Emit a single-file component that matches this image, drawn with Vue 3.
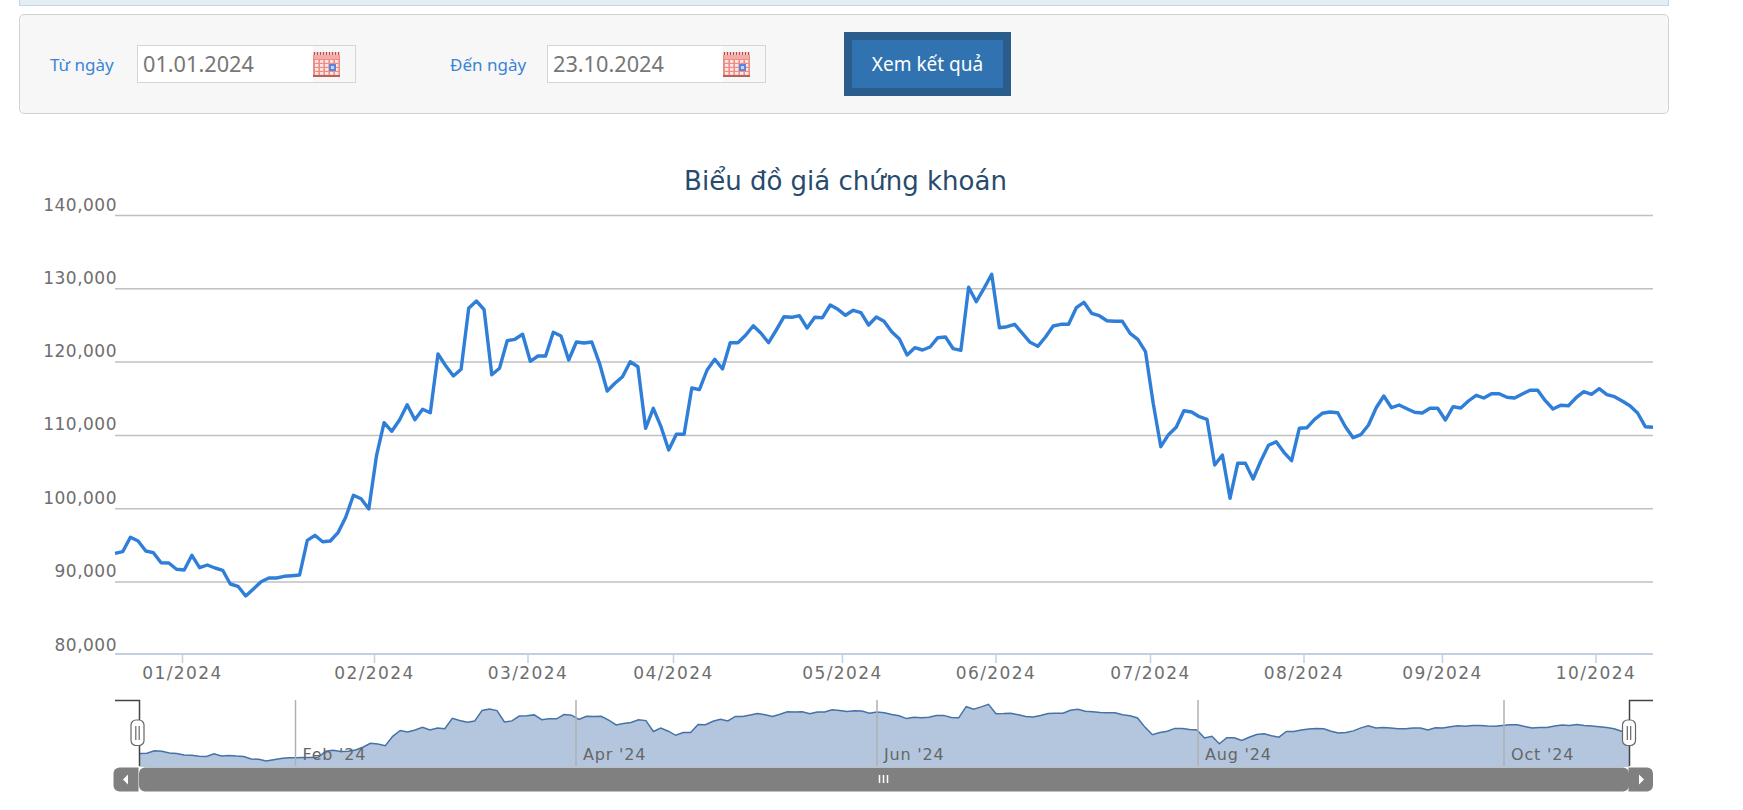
<template>
  <div class="page">
    <div class="top-strip"></div>

    <div class="filter-panel">
      <div v-for="field in dateFields" :key="field.label" class="field">
        <label class="field-label">{{ field.label }}</label>
        <div class="date-box">
          <span class="date-value">{{ field.value }}</span>
          <span class="date-icon">
            <svg width="27" height="25" viewBox="0 0 27 25">
              <rect x="0" y="0" width="27" height="25" fill="#ec8d86" />
              <rect x="0" y="0" width="27" height="3" fill="#f7c6c2" />
              <rect v-for="n in 9" :key="n" :x="n * 3 - 2" y="0" width="1" height="3" fill="#a8504a" />
              <rect x="1" y="3" width="25" height="4" fill="#f6aca6" />
              <template v-for="row in 4" :key="row">
                <rect
                  v-for="col in 5"
                  :key="col"
                  :x="col * 5 - 3"
                  :y="row * 4 + 4"
                  width="3.4"
                  height="2.8"
                  fill="#fde6e4"
                />
              </template>
              <rect x="0" y="23" width="27" height="2" fill="#b9605a" />
              <rect x="16" y="12" width="7" height="7" fill="#5f83dc" />
              <rect x="18" y="14" width="3" height="3" fill="#c8d6f6" />
            </svg>
          </span>
        </div>
      </div>
      <button class="submit-btn" type="button">Xem kết quả</button>
    </div>

    <svg class="chart" width="1743" height="696" viewBox="0 114 1743 696">
      <text x="845.5" y="190" text-anchor="middle" class="chart-title">Biểu đồ giá chứng khoán</text>

      <g v-for="tick in yTicks" :key="tick.label">
        <line v-if="tick.y < 650" x1="115" x2="1653" :y1="tick.y" :y2="tick.y" class="grid-line" />
        <text x="117" :y="tick.y - 5" text-anchor="end" class="axis-label y-label">{{ tick.label }}</text>
      </g>

      <line x1="115" x2="1653" y1="654" y2="654" class="axis-line" />
      <g v-for="tick in xTicks" :key="tick.label">
        <line :x1="tick.x" :x2="tick.x" y1="654" y2="663" class="axis-tick" />
        <text :x="tick.x" y="678.5" text-anchor="middle" class="axis-label x-label">{{ tick.label }}</text>
      </g>

      <polyline :points="pricePoints" class="price-line" />

      <!-- navigator -->
      <path :d="navArea" class="nav-area" />
      <polyline :points="navPoints" class="nav-line" />
      <g v-for="tick in navTicks" :key="tick.label">
        <line :x1="tick.x" :x2="tick.x" y1="700" y2="766" class="nav-tick" />
        <text :x="tick.x + 7" y="760" class="nav-label">{{ tick.label }}</text>
      </g>

      <path d="M115 700.5H139.5V766" class="nav-mask" />
      <path d="M1653 700.5H1629.5V766" class="nav-mask" />
      <g v-for="x in [137.5, 1629]" :key="x">
        <rect :x="x - 6.5" y="720" width="13" height="25.5" rx="5" class="handle" />
        <line :x1="x - 1.7" :x2="x - 1.7" y1="726" y2="740" class="handle-grip" />
        <line :x1="x + 1.7" :x2="x + 1.7" y1="726" y2="740" class="handle-grip" />
      </g>

      <!-- scrollbar -->
      <path d="M138.5 767.5H119.5a6 6 0 0 0-6 6v12a6 6 0 0 0 6 6H138.5z" class="scroll-part" />
      <path d="M1628.5 767.5H1647a6 6 0 0 1 6 6v12a6 6 0 0 1-6 6H1628.5z" class="scroll-part" />
      <rect x="139" y="767.5" width="1490" height="24" rx="6" class="scroll-part" />
      <path d="M128 774.5v10l-5-5z" class="scroll-arrow" />
      <path d="M1639 774.5v10l5-5z" class="scroll-arrow" />
      <path d="M879.5 775v8M883.5 775v8M887.5 775v8" class="scroll-grip" />
    </svg>
  </div>
</template>

<script setup>
// y pixels read off the reference chart, kept per section
const part1 = [820, 815, 772, 783, 813, 818, 848, 849, 868, 870, 826, 863, 855, 864, 871, 912, 919, 948, 927, 905, 894, 894, 889, 887, 885, 781, 766, 785, 783, 758, 712, 646, 656, 687, 527, 428, 454, 420, 374, 419, 388, 398, 222, 257, 288, 268, 85, 63, 89, 284, 265, 182, 178, 163, 244, 228, 228, 157, 168, 240, 186, 189, 186, 250, 333, 310, 290, 245]
const part2 = [320, 505, 445, 500, 570, 523, 523, 384, 389, 330, 298, 327, 248, 248, 226, 197, 220, 248, 210, 170, 172, 167, 204, 172, 173, 135, 148, 166, 151, 158, 195, 171, 184, 215, 237, 285, 263, 270, 261, 233, 231, 266, 271, 82, 125, 85, 43, 203, 200, 193, 220, 247, 259, 231, 198, 193, 193, 143, 127, 160, 167, 182, 184, 184, 220, 238]
const part3 = [35, 190, 320, 284, 262, 212, 216, 230, 238, 375, 345, 475, 370, 370, 417, 363, 316, 305, 337, 362, 265, 263, 238, 220, 216, 218, 260, 293, 284, 255, 203, 168, 203, 195, 206, 217, 219, 205, 205, 240, 200, 204, 183, 166, 174, 161, 161, 172, 174, 162, 151, 151, 182, 207, 196, 197, 173, 155, 163, 146, 164, 170, 183, 197, 219, 260, 262]

const priceY = [
  ...part1.map((v) => 280 + v / 3),
  ...part2.map((v) => 260 + v / 3),
  ...part3.map((v) => 340 + v / 3),
]

const dateFields = [
  { label: 'Từ ngày', value: '01.01.2024' },
  { label: 'Đến ngày', value: '23.10.2024' },
]

const yLabels = ['140,000', '130,000', '120,000', '110,000', '100,000', '90,000', '80,000']
const yTicks = yLabels.map((label, i) => ({ label, y: i === 6 ? 655.5 : 215.5 + i * 73.3 }))

const xTicks = [
  { label: '01/2024', x: 182.5 },
  { label: '02/2024', x: 374.5 },
  { label: '03/2024', x: 528 },
  { label: '04/2024', x: 673.5 },
  { label: '05/2024', x: 842.5 },
  { label: '06/2024', x: 996 },
  { label: '07/2024', x: 1150.5 },
  { label: '08/2024', x: 1304 },
  { label: '09/2024', x: 1442.5 },
  { label: '10/2024', x: 1596 },
]

const navTicks = [
  { label: "Feb '24", x: 295.5 },
  { label: "Apr '24", x: 576 },
  { label: "Jun '24", x: 877 },
  { label: "Aug '24", x: 1198 },
  { label: "Oct '24", x: 1504 },
]

const last = priceY.length - 1
const pricePoints = priceY.map((y, i) => `${(115 + (i * 1538) / last).toFixed(1)},${y.toFixed(1)}`).join(' ')

const navCoords = priceY.map((y, i) => [139.5 + (i * 1489.5) / last, 761 - (596 - y) * 0.176])
const navPoints = navCoords.map(([x, y]) => `${x.toFixed(1)},${y.toFixed(1)}`).join(' ')
const navArea = `M139.5 767L${navPoints.replaceAll(' ', 'L')}L1629 767Z`
</script>

<style>
html,
body {
  background: #fff;
}
</style>

<style scoped>
.page {
  width: 1743px;
  height: 810px;
  overflow: hidden;
  font-family: "Noto Sans", "DejaVu Sans", sans-serif;
}

.top-strip {
  box-sizing: border-box;
  width: 1650px;
  height: 6px;
  margin-left: 19px;
  background-color: #e3edf4;
  border: 1px solid #c6d6e2;
  border-top: none;
}

.filter-panel {
  box-sizing: border-box;
  display: flex;
  align-items: center;
  width: 1650px;
  height: 100px;
  margin: 8px 0 0 19px;
  padding-left: 30px;
  background-color: #f7f7f7;
  border: 1px solid #d2d2d2;
  border-radius: 5px;
}

.field {
  display: flex;
  align-items: center;
}

.field + .field {
  margin-left: 94px;
}

.field-label {
  width: 87px;
  font-size: 17px;
  color: #3a84d6;
}

.field + .field .field-label {
  width: 97px;
}

.date-box {
  box-sizing: border-box;
  display: flex;
  align-items: center;
  width: 219px;
  height: 38px;
  border: 1px solid #d6d6d6;
}

.date-value {
  box-sizing: border-box;
  width: 175px;
  height: 36px;
  padding-left: 5px;
  line-height: 36px;
  font-size: 21.7px;
  color: #777;
  background-color: #fff;
}

.date-icon {
  display: block;
  height: 25px;
}

.date-icon svg {
  display: block;
}

.submit-btn {
  box-sizing: border-box;
  width: 167px;
  height: 64px;
  margin-left: 78px;
  padding: 0;
  font-family: inherit;
  font-size: 19px;
  color: #fff;
  background-color: #3073b0;
  border: 8px solid #2a5d8c;
}

.chart {
  display: block;
}

.chart-title {
  font-family: "DejaVu Sans", sans-serif;
  font-size: 26px;
  fill: #274b6d;
}

.axis-label {
  font-family: "DejaVu Sans", sans-serif;
  font-size: 17px;
  fill: #6e6e6e;
}

.y-label {
  letter-spacing: 0.5px;
}

.x-label {
  letter-spacing: 1.4px;
}

.grid-line {
  stroke: #c0c0c0;
  stroke-width: 1.5;
}

.axis-line {
  stroke: #c0d0e0;
  stroke-width: 2;
}

.axis-tick {
  stroke: #c0d0e0;
  stroke-width: 1.5;
}

.price-line {
  fill: none;
  stroke: #2f7ed8;
  stroke-width: 3.4;
  stroke-linejoin: round;
}

.nav-area {
  fill: #b4c6dd;
}

.nav-line {
  fill: none;
  stroke: #4572a7;
  stroke-width: 1.5;
}

.nav-tick {
  stroke: #b0b0b0;
  stroke-width: 1.5;
}

.nav-label {
  font-family: "DejaVu Sans", sans-serif;
  font-size: 16px;
  letter-spacing: 0.8px;
  fill: #666;
}

.nav-mask {
  fill: none;
  stroke: #444;
  stroke-width: 1.5;
}

.handle {
  fill: #fff;
  stroke: #666;
  stroke-width: 1.2;
}

.handle-grip {
  stroke: #666;
  stroke-width: 1.2;
}

.scroll-part {
  fill: #808080;
}

.scroll-arrow {
  fill: #fff;
}

.scroll-grip {
  fill: none;
  stroke: #fff;
  stroke-width: 1.5;
}
</style>
